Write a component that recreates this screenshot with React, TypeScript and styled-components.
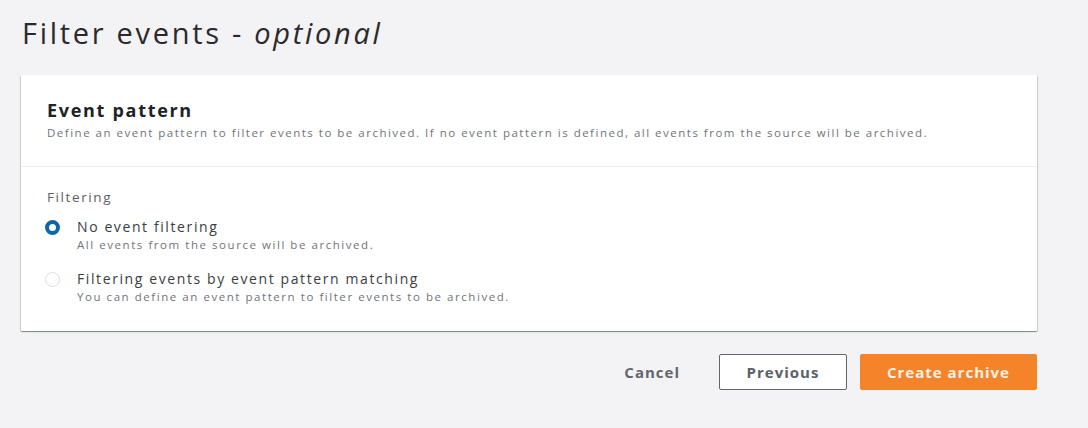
import React from "react";
import styled, { createGlobalStyle } from "styled-components";

const Global = createGlobalStyle`
  html, body { margin: 0; padding: 0; background: #f3f2f4; }
  body { font-family: "Open Sans", "Liberation Sans", sans-serif; color: #16191f; }
`;

const Page = styled.div`
  width: 1088px;
  height: 428px;
  box-sizing: border-box;
  padding: 13px 51px 0 21px;
  display: flex;
  flex-direction: column;
`;

const Title = styled.h1`
  margin: 0 0 0 1px;
  font-size: 29px;
  line-height: 40px;
  font-weight: 400;
  color: #2a2a2d;
  letter-spacing: 2.7px;
  em { font-style: italic; }
`;

const Card = styled.section`
  margin-top: 22px;
  background: #ffffff;
  border-radius: 1px;
  box-shadow: 0 1px 1px 0 rgba(0, 28, 36, 0.3), 1px 1px 1px 0 rgba(0, 28, 36, 0.15), -1px 1px 1px 0 rgba(0, 28, 36, 0.15);
  display: flex;
  flex-direction: column;
`;

const CardHeader = styled.header`
  padding: 24px 26px 25px;
  border-bottom: 1px solid #f0eff2;
`;

const CardTitle = styled.h2`
  margin: 0;
  font-size: 18px;
  line-height: 22px;
  font-weight: 700;
  color: #202226;
  letter-spacing: 1.7px;
`;

const CardDesc = styled.p`
  margin: 4px 0 0;
  font-size: 11.5px;
  line-height: 16px;
  color: #6f747b;
  letter-spacing: 1.5px;
  white-space: nowrap;
`;

const CardBody = styled.div`
  padding: 21px 26px 26px;
  display: flex;
  flex-direction: column;
`;

const FieldLabel = styled.div`
  font-size: 13.5px;
  line-height: 18px;
  color: #5b6067;
  letter-spacing: 1.6px;
  margin-bottom: 12px;
`;

const RadioList = styled.div`
  display: flex;
  flex-direction: column;
  gap: 17px;
`;

const RadioRow = styled.label`
  display: flex;
  align-items: flex-start;
  gap: 17px;
  margin-left: -2px;
`;

const RadioDot = styled.span<{ $checked?: boolean }>`
  flex: none;
  box-sizing: border-box;
  width: 15px;
  height: 15px;
  margin-top: 2px;
  border-radius: 50%;
  background: #fff;
  border: ${(p) => (p.$checked ? "4px solid #0b67ab" : "1.5px solid #dcdde0")};
`;

const RadioText = styled.div`
  display: flex;
  flex-direction: column;
`;

const RadioLabel = styled.span`
  font-size: 14px;
  line-height: 18px;
  color: #3a3d42;
  letter-spacing: 1.6px;
`;

const RadioDesc = styled.span`
  font-size: 11.5px;
  line-height: 17px;
  color: #6f747b;
  letter-spacing: 1.55px;
`;

const Actions = styled.div`
  margin-top: 23px;
  display: flex;
  justify-content: flex-end;
  align-items: center;
  gap: 13px;
`;

const Button = styled.button<{ $variant: "link" | "normal" | "primary" }>`
  box-sizing: border-box;
  height: 36px;
  font-family: "Open Sans", "Liberation Sans", sans-serif;
  font-size: 15px;
  font-weight: 700;
  letter-spacing: 1px;
  border-radius: 2px;
  cursor: pointer;
  ${(p) =>
    p.$variant === "link"
      ? `background: transparent; border: none; color: #62666c; padding: 0 26px 0 0;`
      : p.$variant === "normal"
      ? `background: #fff; border: 1px solid #62666c; color: #5b6067; width: 128px;`
      : `background: #f5832a; border: 1px solid #f5832a; color: #fdf1e4; width: 177px;`}
`;

export default function App() {
  return (
    <>
      <Global />
      <Page>
        <Title>
          Filter events - <em>optional</em>
        </Title>
        <Card>
          <CardHeader>
            <CardTitle>Event pattern</CardTitle>
            <CardDesc>
              Define an event pattern to filter events to be archived. If no event pattern is defined, all events from the source will be archived.
            </CardDesc>
          </CardHeader>
          <CardBody>
            <FieldLabel>Filtering</FieldLabel>
            <RadioList>
              <RadioRow>
                <RadioDot $checked />
                <RadioText>
                  <RadioLabel>No event filtering</RadioLabel>
                  <RadioDesc>All events from the source will be archived.</RadioDesc>
                </RadioText>
              </RadioRow>
              <RadioRow>
                <RadioDot />
                <RadioText>
                  <RadioLabel>Filtering events by event pattern matching</RadioLabel>
                  <RadioDesc>You can define an event pattern to filter events to be archived.</RadioDesc>
                </RadioText>
              </RadioRow>
            </RadioList>
          </CardBody>
        </Card>
        <Actions>
          <Button $variant="link">Cancel</Button>
          <Button $variant="normal">Previous</Button>
          <Button $variant="primary">Create archive</Button>
        </Actions>
      </Page>
    </>
  );
}
